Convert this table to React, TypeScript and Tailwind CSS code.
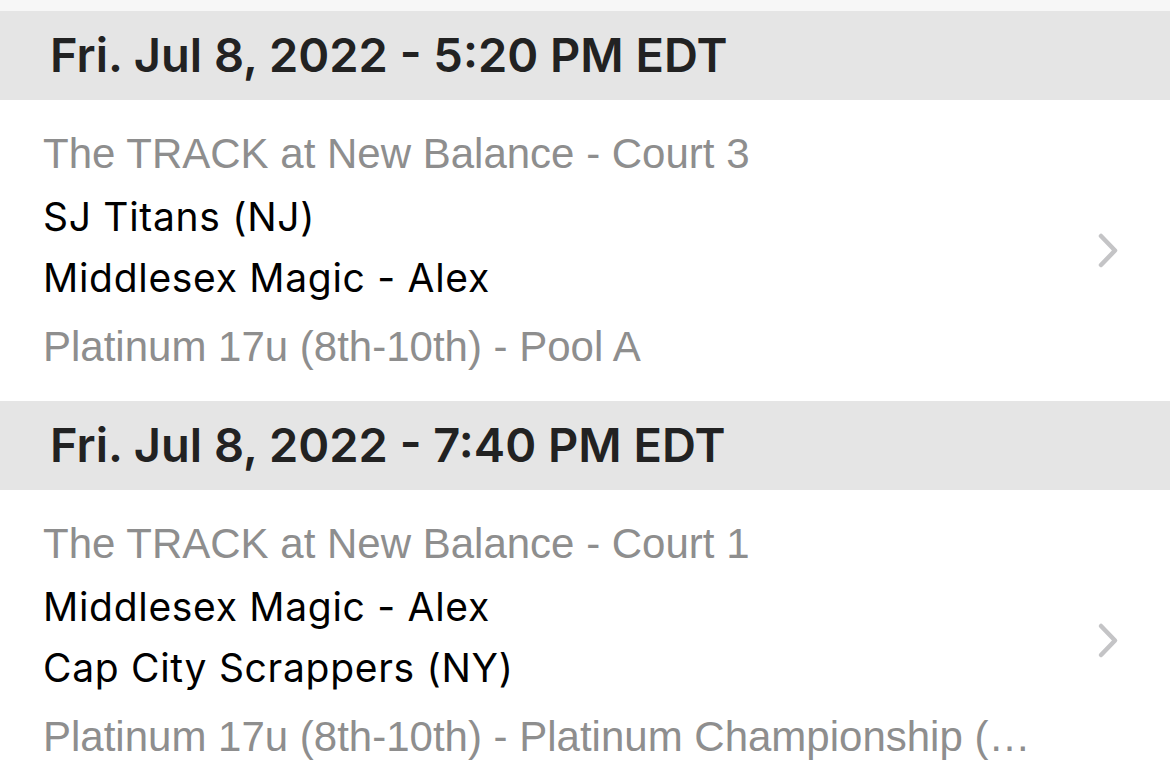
import React from "react";

const Chevron = () => (
  <svg width="26" height="40" viewBox="0 0 26 40" fill="none">
    <path d="M5 5 L19 19.5 L5 34" stroke="#c4c4c6" strokeWidth="4.5" strokeLinecap="round" strokeLinejoin="round" />
  </svg>
);

type Game = {
  header: string;
  venue: string;
  team1: string;
  team2: string;
  division: string;
};

const games: Game[] = [
  {
    header: "Fri. Jul 8, 2022 - 5:20 PM EDT",
    venue: "The TRACK at New Balance - Court 3",
    team1: "SJ Titans (NJ)",
    team2: "Middlesex Magic - Alex",
    division: "Platinum 17u (8th-10th) - Pool A",
  },
  {
    header: "Fri. Jul 8, 2022 - 7:40 PM EDT",
    venue: "The TRACK at New Balance - Court 1",
    team1: "Middlesex Magic - Alex",
    team2: "Cap City Scrappers (NY)",
    division: "Platinum 17u (8th-10th) - Platinum Championship (…",
  },
];

export default function App() {
  return (
    <div className="w-[1170px] h-[772px] overflow-hidden bg-white">
      <div className="h-[11px] bg-[#f7f7f7]" />
      {games.map((g, i) => (
        <div key={i}>
          <div className="h-[89px] bg-[#e5e5e5] flex items-center pl-[50px]">
            <span className="font-['Inter',sans-serif] font-semibold text-[47px] text-[#222222]">
              {g.header}
            </span>
          </div>
          <div className="flex items-center bg-white">
            <div className="flex-1 pl-[43px] pt-[22px] pb-[24px] min-w-0">
              <div className="h-[62px] flex items-center font-['Liberation_Sans',Arial,sans-serif] text-[42px] text-[#8e8e8e] whitespace-nowrap">
                {g.venue}
              </div>
              <div className="h-[62px] mt-[2px] flex items-center font-['Inter',sans-serif] text-[39px] tracking-[0.7px] text-black whitespace-nowrap">
                {g.team1}
              </div>
              <div className="h-[60px] flex items-center font-['Inter',sans-serif] text-[39px] tracking-[0.7px] text-black whitespace-nowrap">
                {g.team2}
              </div>
              <div className="h-[62px] mt-[7px] flex items-center font-['Liberation_Sans',Arial,sans-serif] text-[42px] text-[#8e8e8e] whitespace-nowrap">
                {g.division}
              </div>
            </div>
            <div className="w-[84px] flex justify-start pl-[10px]">
              <Chevron />
            </div>
          </div>
        </div>
      ))}
    </div>
  );
}
